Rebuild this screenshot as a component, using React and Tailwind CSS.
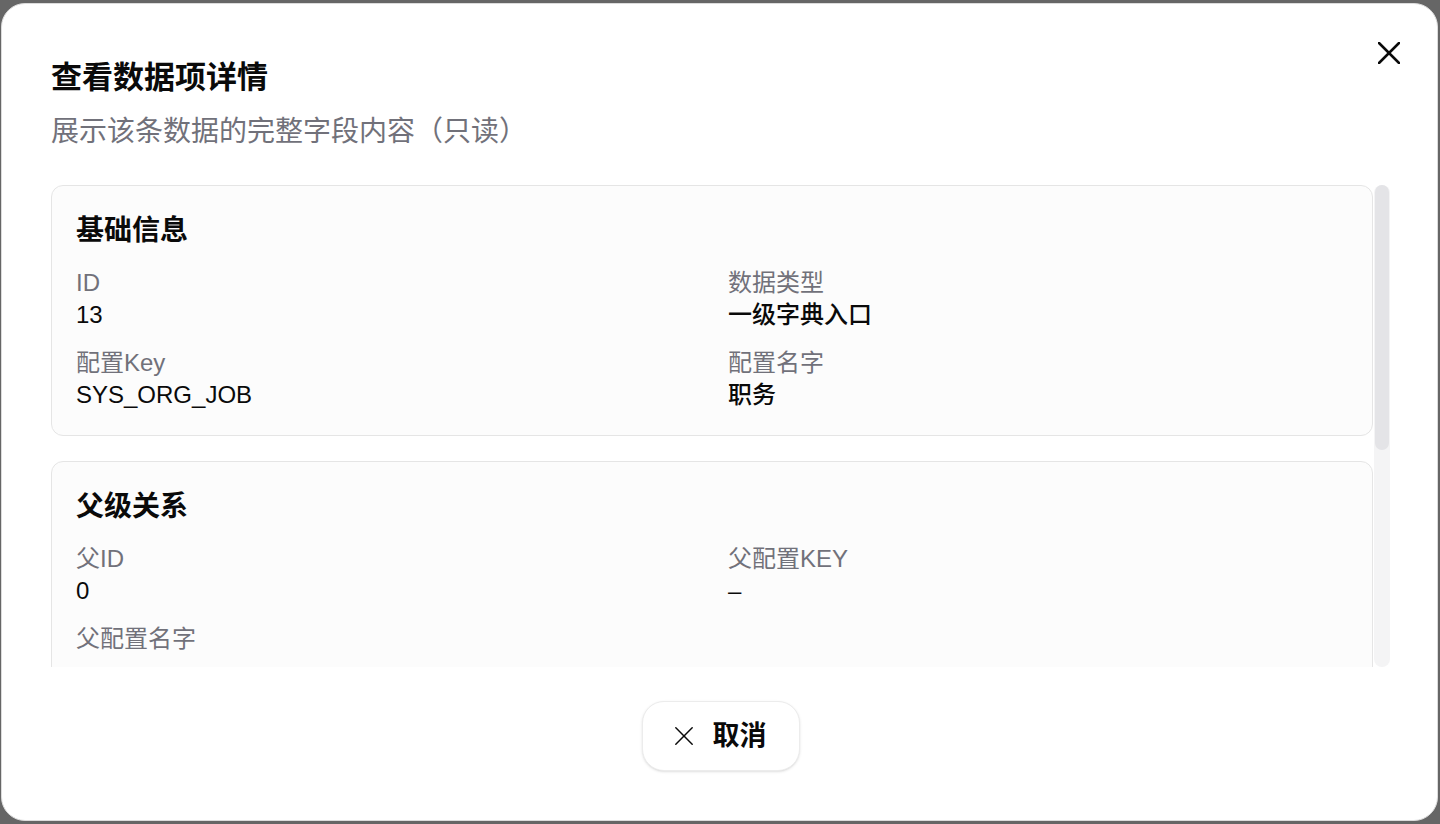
import React from "react";

const sections = [
    {
        title: "基础信息",
        fields: [
            { label: "ID", value: "13" },
            { label: "数据类型", value: "一级字典入口" },
            { label: "配置Key", value: "SYS_ORG_JOB" },
            { label: "配置名字", value: "职务" },
        ],
    },
    {
        title: "父级关系",
        fields: [
            { label: "父ID", value: "0" },
            { label: "父配置KEY", value: "–" },
            { label: "父配置名字", value: "–" },
        ],
    },
];

function CloseIcon({ className, strokeWidth = 2.5 }) {
    return (
        <svg viewBox="0 0 22 22" className={className} fill="none" stroke="currentColor" strokeWidth={strokeWidth} strokeLinecap="round">
            <path d="M1 1 L21 21" />
            <path d="M21 1 L1 21" />
        </svg>
    );
}

function Section({ title, fields }) {
    return (
        <div className="rounded-xl border border-[#e5e5e5] bg-[#fcfcfc] px-6 pt-[25px] pb-6">
            <h3 className="text-[28px] leading-[40px] font-bold text-[#0a0a0a]">{title}</h3>
            <div className="mt-4 grid grid-cols-2 gap-x-8 gap-y-4">
                {fields.map((f) => (
                    <div key={f.label} className="flex flex-col">
                        <span className="text-[24px] leading-[32px] text-[#71717a]">{f.label}</span>
                        <span className="text-[24px] leading-[32px] font-medium text-[#0a0a0a]">{f.value}</span>
                    </div>
                ))}
            </div>
        </div>
    );
}

export default function App() {
    return (
        <div
            className="h-[824px] w-[1440px] bg-[#666666] pt-[3px] pl-px pr-[2px] pb-[3px] overflow-hidden"
            style={{ fontFamily: '"Liberation Sans", "Noto Sans CJK SC", sans-serif' }}
        >
            <div className="relative flex h-full flex-col rounded-[24px] border border-[#dcdcdc] bg-white pl-[49px] pr-[47px] pt-[56px] pb-[49px]">
                <button className="absolute right-[37px] top-[38px] text-[#0a0a0a]">
                    <CloseIcon className="h-[22px] w-[22px]" />
                </button>

                <h2 className="text-[31px] leading-[36px] font-bold text-[#0a0a0a]">查看数据项详情</h2>
                <p className="mt-[20px] text-[28px] leading-[32px] text-[#71717a]">展示该条数据的完整字段内容（只读）</p>

                <div className="mt-[37px] flex h-[482px] gap-px">
                    <div className="flex-1 overflow-hidden">
                        <div className="flex flex-col gap-[25px]">
                            {sections.map((s) => (
                                <Section key={s.title} {...s} />
                            ))}
                        </div>
                    </div>
                    <div className="w-4 rounded-full bg-[#f4f4f5] px-px">
                        <div className="h-[265px] rounded-full bg-[#e4e4e7]" />
                    </div>
                </div>

                <div className="mt-[34px] flex justify-center">
                    <button className="flex h-[70px] w-[158px] items-center justify-center gap-[20px] rounded-[22px] border border-[#ececec] bg-white shadow-sm">
                        <CloseIcon className="h-[18px] w-[18px] text-[#0a0a0a]" strokeWidth={1.8} />
                        <span className="text-[27px] leading-[32px] font-semibold text-[#0a0a0a]">取消</span>
                    </button>
                </div>
            </div>
        </div>
    );
}
